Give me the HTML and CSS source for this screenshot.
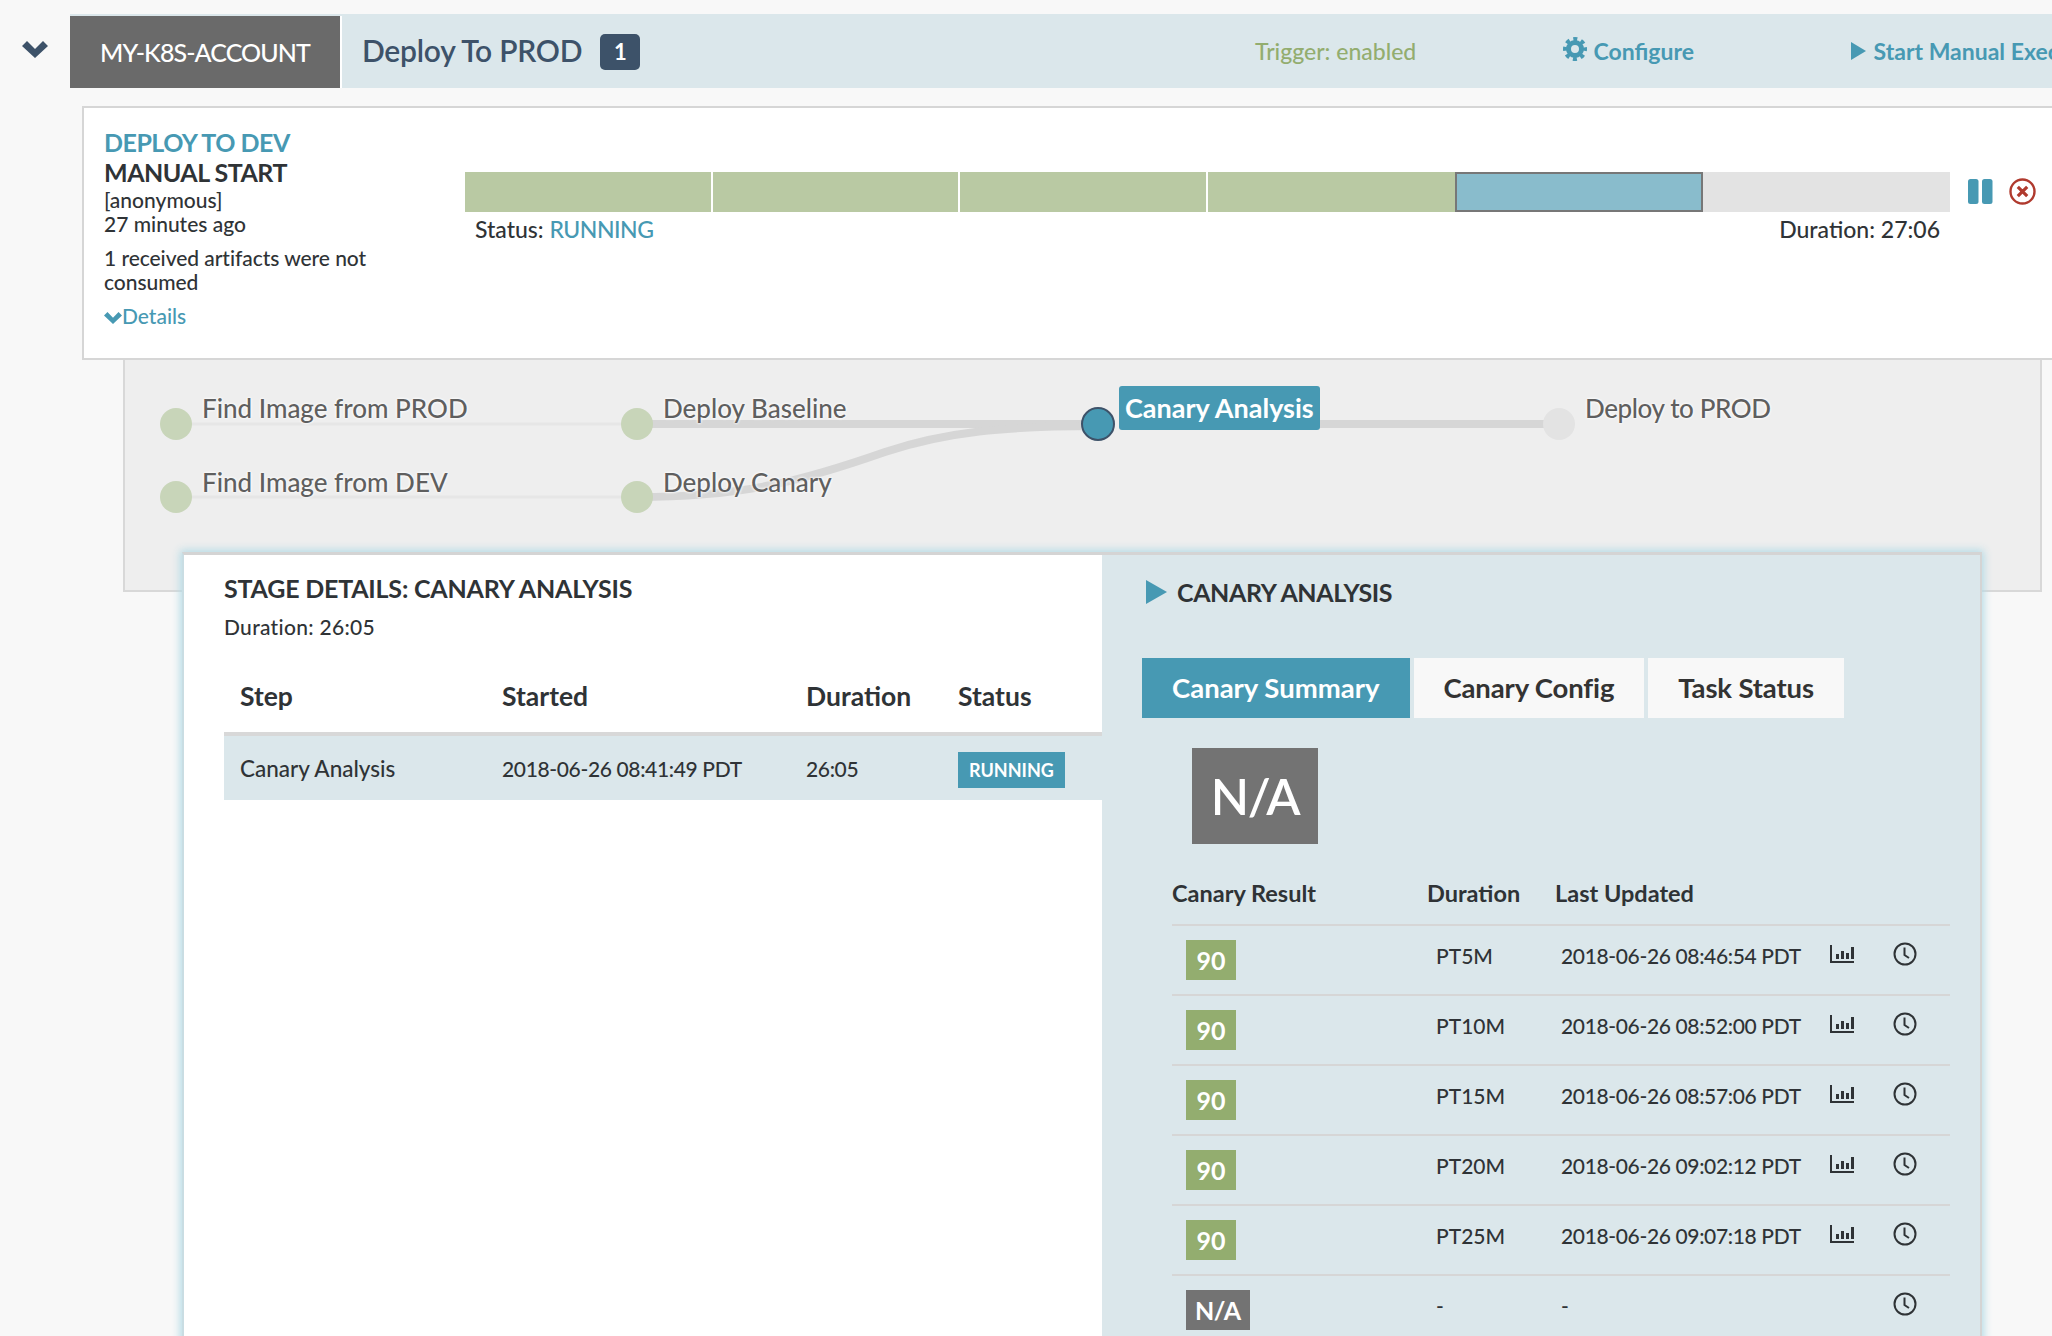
FILE: index.html
```html
<!DOCTYPE html>
<html>
  <head>
    <meta charset="UTF-8"/>
    <title>Deploy To PROD</title>
    <link rel="stylesheet" href="styles.css">
  </head>
  <body>
    <section class="pipeline">
      <div class="pipeline-bar">
        <svg class="chevron" viewBox="0 0 26 17"><path d="M0 5 L5 0 L13 8 L21 0 L26 5 L13 17 Z"/></svg>
        <div class="account">MY-K8S-ACCOUNT</div>
        <h2 class="pipeline-name">Deploy To PROD</h2>
        <span class="count">1</span>
        <div class="actions">
          <span class="trigger">Trigger: enabled</span>
          <a class="action">
            <svg class="gear" viewBox="0 0 24 24">
              <circle cx="12" cy="12" r="6.5" fill="none" stroke-width="5"/>
              <circle cx="12" cy="12" r="10" fill="none" stroke-width="4" stroke-dasharray="4 3.85" stroke-dashoffset="2"/>
            </svg>
            Configure
          </a>
          <a class="action">
            <svg class="play-small" viewBox="0 0 15 18"><path d="M0 0 L15 9 L0 18 Z"/></svg>
            Start Manual Execution
          </a>
        </div>
      </div>

      <div class="execution">
        <div class="info">
          <div class="info-title">DEPLOY TO DEV</div>
          <div class="info-sub">MANUAL START</div>
          <div class="info-line">[anonymous]</div>
          <div class="info-line">27 minutes ago</div>
          <div class="info-warn">1 received artifacts were not consumed</div>
          <a class="details-link">
            <svg class="chevron-small" viewBox="0 0 26 17"><path d="M0 5 L5 0 L13 8 L21 0 L26 5 L13 17 Z"/></svg>Details
          </a>
        </div>
        <div class="progress">
          <div class="progress-bar">
            <div class="seg done"></div>
            <div class="seg done"></div>
            <div class="seg done"></div>
            <div class="seg done"></div>
            <div class="seg active"></div>
            <div class="seg"></div>
          </div>
          <div class="progress-meta">
            <span>Status: <span class="running">RUNNING</span></span>
            <span>Duration: 27:06</span>
          </div>
        </div>
        <div class="controls">
          <svg class="pause" viewBox="0 0 25 25"><rect x="0" y="0" width="10.5" height="25" rx="2.5"/><rect x="14" y="0" width="10.5" height="25" rx="2.5"/></svg>
          <svg class="cancel" viewBox="0 0 27 27">
            <circle cx="13.5" cy="13.5" r="12" fill="none" stroke-width="2.4"/>
            <path d="M8.8 8.8 L18.2 18.2 M18.2 8.8 L8.8 18.2" fill="none" stroke-width="3.2"/>
          </svg>
        </div>
      </div>

      <div class="graph">
        <svg class="graph-lines" viewBox="0 0 1915 230" width="1915" height="230">
          <path class="thin" d="M51 64 H512"/>
          <path class="thin" d="M51 137 H512"/>
          <path class="thick" d="M512 64 H973"/>
          <path class="thick" d="M512 137 C620 137 680 120 760 92 C820 72 880 66 973 66"/>
          <path class="thick" d="M1150 64 H1434"/>
          <circle class="node-done" cx="51" cy="64" r="16"/>
          <circle class="node-done" cx="51" cy="137" r="16"/>
          <circle class="node-done" cx="512" cy="64" r="16"/>
          <circle class="node-done" cx="512" cy="137" r="16"/>
          <circle class="node-active" cx="973" cy="64" r="16"/>
          <circle class="node-todo" cx="1434" cy="64" r="16"/>
        </svg>
        <span class="node-label l-prod">Find Image from PROD</span>
        <span class="node-label l-dev">Find Image from DEV</span>
        <span class="node-label l-base">Deploy Baseline</span>
        <span class="node-label l-canary">Deploy Canary</span>
        <span class="node-label l-analysis">Canary Analysis</span>
        <span class="node-label l-deploy">Deploy to PROD</span>
      </div>

      <div class="details">
        <div class="stage">
          <h3 class="stage-title">STAGE DETAILS: CANARY ANALYSIS</h3>
          <div class="stage-duration">Duration: 26:05</div>
          <div class="steps steps-head">
            <span>Step</span><span>Started</span><span>Duration</span><span>Status</span>
          </div>
          <div class="steps steps-row">
            <span>Canary Analysis</span><span class="stamp">2018-06-26 08:41:49 PDT</span><span class="stamp">26:05</span><span class="status-tag">RUNNING</span>
          </div>
        </div>

        <div class="task">
          <div class="task-head">
            <svg class="play" viewBox="0 0 21 24"><path d="M0 0 L21 12 L0 24 Z"/></svg>
            <h3>CANARY ANALYSIS</h3>
          </div>
          <div class="tabs">
            <a class="tab on">Canary Summary</a>
            <a class="tab">Canary Config</a>
            <a class="tab">Task Status</a>
          </div>
          <div class="score-big">N/A</div>
          <div class="runs-head">
            <span>Canary Result</span><span>Duration</span><span>Last Updated</span>
          </div>

          <div class="run">
            <span class="score ok">90</span><span>PT5M</span><span class="stamp">2018-06-26 08:46:54 PDT</span>
            <svg class="ico-bars" viewBox="0 0 24 18"><path d="M0 0 H2 V16 H24 V18 H0 Z M6 9 H9 V14 H6 Z M11 6 H14 V14 H11 Z M16 8 H19 V14 H16 Z M21 2 H24 V14 H21 Z"/></svg>
            <svg class="ico-clock" viewBox="0 0 24 24"><circle cx="12" cy="12" r="10.5"/><path d="M11.5 5.5 V13 L16 16"/></svg>
          </div>
          <div class="run">
            <span class="score ok">90</span><span>PT10M</span><span class="stamp">2018-06-26 08:52:00 PDT</span>
            <svg class="ico-bars" viewBox="0 0 24 18"><path d="M0 0 H2 V16 H24 V18 H0 Z M6 9 H9 V14 H6 Z M11 6 H14 V14 H11 Z M16 8 H19 V14 H16 Z M21 2 H24 V14 H21 Z"/></svg>
            <svg class="ico-clock" viewBox="0 0 24 24"><circle cx="12" cy="12" r="10.5"/><path d="M11.5 5.5 V13 L16 16"/></svg>
          </div>
          <div class="run">
            <span class="score ok">90</span><span>PT15M</span><span class="stamp">2018-06-26 08:57:06 PDT</span>
            <svg class="ico-bars" viewBox="0 0 24 18"><path d="M0 0 H2 V16 H24 V18 H0 Z M6 9 H9 V14 H6 Z M11 6 H14 V14 H11 Z M16 8 H19 V14 H16 Z M21 2 H24 V14 H21 Z"/></svg>
            <svg class="ico-clock" viewBox="0 0 24 24"><circle cx="12" cy="12" r="10.5"/><path d="M11.5 5.5 V13 L16 16"/></svg>
          </div>
          <div class="run">
            <span class="score ok">90</span><span>PT20M</span><span class="stamp">2018-06-26 09:02:12 PDT</span>
            <svg class="ico-bars" viewBox="0 0 24 18"><path d="M0 0 H2 V16 H24 V18 H0 Z M6 9 H9 V14 H6 Z M11 6 H14 V14 H11 Z M16 8 H19 V14 H16 Z M21 2 H24 V14 H21 Z"/></svg>
            <svg class="ico-clock" viewBox="0 0 24 24"><circle cx="12" cy="12" r="10.5"/><path d="M11.5 5.5 V13 L16 16"/></svg>
          </div>
          <div class="run">
            <span class="score ok">90</span><span>PT25M</span><span class="stamp">2018-06-26 09:07:18 PDT</span>
            <svg class="ico-bars" viewBox="0 0 24 18"><path d="M0 0 H2 V16 H24 V18 H0 Z M6 9 H9 V14 H6 Z M11 6 H14 V14 H11 Z M16 8 H19 V14 H16 Z M21 2 H24 V14 H21 Z"/></svg>
            <svg class="ico-clock" viewBox="0 0 24 24"><circle cx="12" cy="12" r="10.5"/><path d="M11.5 5.5 V13 L16 16"/></svg>
          </div>
          <div class="run">
            <span class="score na">N/A</span><span>-</span><span>-</span>
            <span></span>
            <svg class="ico-clock" viewBox="0 0 24 24"><circle cx="12" cy="12" r="10.5"/><path d="M11.5 5.5 V13 L16 16"/></svg>
          </div>
        </div>
      </div>
    </section>
  </body>
</html>
```

FILE: styles.css
```css
html, body { margin: 0; padding: 0; height: 1336px; overflow: hidden; }
body {
    background: #f8f8f8;
    color: #2f3336;
    font-family: "Lato", "Noto Sans", sans-serif;
    font-size: 21px;
    font-weight: 500;
}
h2, h3 { margin: 0; }

/* top bar */
.pipeline-bar {
    display: flex;
    align-items: center;
    height: 74px;
    margin: 14px 0 0 70px;
    background: #dbe7eb;
    position: relative;
    white-space: nowrap;
}
.chevron {
    position: absolute;
    left: -48px;
    top: 27px;
    width: 26px;
    height: 17px;
    fill: #3d5269;
}
.account {
    align-self: flex-end;
    width: 270px;
    height: 72px;
    line-height: 72px;
    text-align: center;
    background: #6a6a6a;
    color: #fff;
    font-size: 25px;
    letter-spacing: -0.9px;
    border-right: 2px solid #fff;
}
.pipeline-name {
    margin: -3px 0 0 20px;
    font-size: 30px;
    font-weight: 600;
    letter-spacing: -0.25px;
    color: #3d5269;
}
.count {
    margin: 1px 0 0 18px;
    width: 40px;
    height: 36px;
    line-height: 36px;
    text-align: center;
    border-radius: 5px;
    background: #3d5269;
    color: #fff;
    font-weight: 700;
    font-size: 22px;
}
.actions {
    margin-left: auto;
    width: 797px;
    display: grid;
    grid-template-columns: 308px 288px auto;
    font-size: 23px;
}
.trigger { color: #93ad6f; }
.action { color: #4799b3; font-weight: 700; }
.gear { width: 24px; height: 24px; stroke: #4799b3; vertical-align: -1px; margin-right: 1px; }
.play-small { width: 15px; height: 18px; fill: #4799b3; margin-right: 2px; }

/* execution card */
.execution {
    display: flex;
    box-sizing: border-box;
    height: 254px;
    margin: 18px -10px 0 82px;
    background: #fff;
    border: 2px solid #d6d6d6;
}
.info { width: 381px; padding: 19px 0 0 20px; box-sizing: border-box; }
.info-title, .info-sub { font-size: 25px; font-weight: 700; line-height: 30px; letter-spacing: -0.5px; }
.info-title { color: #4799b3; }
.info-line { line-height: 24px; }
.info-sub + .info-line { margin-top: 1px; }
.info-warn { width: 290px; margin-top: 10px; line-height: 24px; letter-spacing: -0.05px; }
.details-link { display: block; margin-top: 8px; line-height: 28px; color: #4799b3; }
.chevron-small { width: 18px; height: 12px; fill: #4799b3; }
.progress { width: 1485px; margin-top: 64px; }
.progress-bar { display: flex; height: 40px; background: #e3e3e3; }
.seg { flex: 0 0 16.6667%; box-sizing: border-box; }
.seg.done { background: #b9c9a3; border-right: 2px solid #fff; }
.seg.done:nth-child(4) { border-right: 0; }
.seg.active { background: #89bccc; border: 2px solid #777; }
.progress-meta {
    display: flex;
    justify-content: space-between;
    padding: 3px 10px;
    font-size: 23px;
}
.running { color: #4799b3; letter-spacing: -0.5px; }
.controls { margin: 70px 0 0 18px; display: flex; align-items: center; gap: 16px; height: 26px; flex: none; }
.pause { width: 25px; height: 25px; fill: #4799b3; flex: none; }
.cancel { width: 27px; height: 27px; stroke: #b03a2e; flex: none; }

/* stage graph */
.graph {
    position: relative;
    box-sizing: border-box;
    width: 1919px;
    height: 232px;
    margin-left: 123px;
    background: #eeeeee;
    border: solid #d8d8d8;
    border-width: 0 2px 2px;
}
.graph-lines { position: absolute; left: 0; top: 0; }
.thin { fill: none; stroke: #e6e6e6; stroke-width: 3; }
.thick { fill: none; stroke: #d6d6d6; stroke-width: 8; }
.node-done { fill: #c8d5b9; }
.node-active { fill: #4799b3; stroke: #3d5269; stroke-width: 2; }
.node-todo { fill: #e3e3e3; }
.node-label {
    position: absolute;
    font-size: 26px;
    line-height: 36px;
    color: #5f5f5f;
    white-space: nowrap;
    text-shadow: 0 0 3px #fff, 0 0 3px #fff;
}
.l-prod { left: 77px; top: 30px; }
.l-dev { left: 77px; top: 104px; }
.l-base { left: 538px; top: 30px; }
.l-canary { left: 538px; top: 104px; }
.l-analysis {
    left: 994px;
    top: 26px;
    padding: 4px 6px;
    border-radius: 3px;
    background: #4799b3;
    color: #fff;
    font-size: 27px;
    font-weight: 700;
    text-shadow: none;
}
.l-deploy { left: 1460px; top: 30px; letter-spacing: -0.4px; }

/* details panel */
.details {
    position: relative;
    display: grid;
    grid-template-columns: 918px 878px;
    width: 1796px;
    height: 900px;
    margin: -40px 0 0 182px;
    border: solid #d4d4d4;
    border-width: 3px 2px 0;
    border-left-color: #c9dde3;
    box-shadow: 0 0 8px 2px #b5dbe6;
}
.stage { background: #fff; padding: 18px 0 0 40px; }
.stage-title { font-size: 25px; line-height: 30px; font-weight: 700; letter-spacing: -0.2px; }
.stage-duration { margin-top: 9px; line-height: 30px; letter-spacing: 0.3px; }
.steps { display: grid; grid-template-columns: 262px 304px 152px 1fr; padding-left: 16px; align-items: center; }
.steps-head { height: 72px; margin-top: 18px; font-size: 26.5px; font-weight: 700; border-bottom: 4px solid #d8d8d8; box-sizing: content-box; }
.steps-row { height: 64px; background: #dbe7eb; font-size: 22.5px; }
.stamp { font-size: 21px; letter-spacing: -0.35px; }
.status-tag {
    justify-self: start;
    height: 36px;
    margin-top: 3px;
    line-height: 36px;
    padding: 0 11px;
    background: #4799b3;
    color: #fff;
    font-weight: 700;
    font-size: 18px;
}

.task { background: #dbe7eb; }
.task-head { display: flex; align-items: center; gap: 10px; margin: 22px 0 0 44px; height: 30px; }
.task-head h3 { font-size: 25px; font-weight: 700; letter-spacing: -0.4px; }
.play { width: 21px; height: 24px; fill: #4799b3; }
.tabs { display: flex; gap: 4px; margin: 51px 0 0 40px; }
.tab {
    height: 60px;
    line-height: 60px;
    padding: 0 30px;
    background: #f8f8f8;
    font-size: 27.5px;
    font-weight: 700;
    letter-spacing: -0.15px;
    color: #333;
}
.tab.on { background: #4799b3; color: #fff; letter-spacing: 0; }
.score-big {
    width: 126px;
    height: 96px;
    line-height: 96px;
    margin: 30px 0 0 90px;
    text-align: center;
    background: #737373;
    color: #fff;
    font-size: 50px;
    font-weight: 600;
    letter-spacing: -1.5px;
}
.runs-head {
    display: grid;
    grid-template-columns: 255px 128px 1fr;
    margin: 35px 0 0 70px;
    width: 778px;
    height: 45px;
    font-size: 23.5px;
    font-weight: 700;
}
.run {
    display: grid;
    grid-template-columns: 250px 125px 269px 63px 24px;
    box-sizing: border-box;
    width: 778px;
    height: 70px;
    margin-left: 70px;
    padding: 14px 0 0 14px;
    border-top: 2px solid #d6d6d6;
    line-height: 32px;
    font-size: 21px;
}
.score {
    justify-self: start;
    height: 40px;
    line-height: 40px;
    padding: 0 10.5px;
    color: #fff;
    font-size: 25px;
    font-weight: 700;
}
.score.ok { background: #93ad6f; }
.score.na { background: #737373; padding: 0 9px; letter-spacing: -0.4px; }
.ico-bars { width: 24px; height: 18px; fill: #2f3336; margin-top: 5px; }
.ico-clock { width: 24px; height: 24px; fill: none; stroke: #2f3336; stroke-width: 2; margin-top: 2px; }
```
